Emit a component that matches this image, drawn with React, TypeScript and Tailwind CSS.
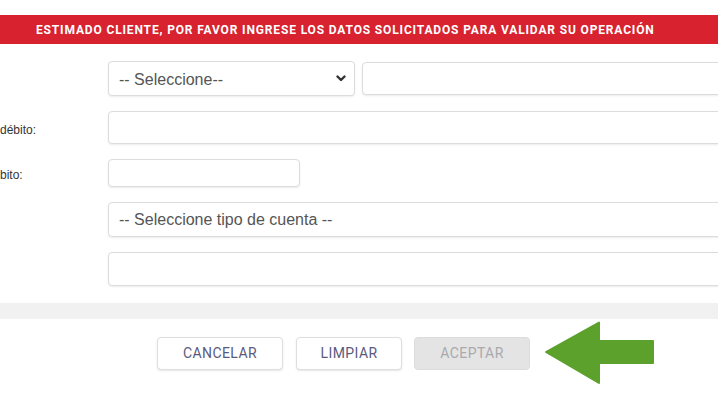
import React from 'react';

const font = { fontFamily: 'Roboto, "Liberation Sans", Arial, sans-serif' };
const arial = { fontFamily: '"Liberation Sans", Arial, sans-serif' };

const Box = ({ className = '', children }: { className?: string; children?: React.ReactNode }) => (
  <div
    className={`rounded-[4px] border border-[#dcdcdc] bg-white shadow-[0_1px_2px_rgba(0,0,0,0.08)] ${className}`}
  >
    {children}
  </div>
);

const Chevron = () => (
  <svg width="10" height="7" viewBox="0 0 10 7">
    <path d="M1.5 1.5 L5 5 L8.5 1.5" stroke="#333" strokeWidth="2.4" fill="none" strokeLinecap="round" strokeLinejoin="round" />
  </svg>
);

const App = () => {
  return (
    <div className="w-[718px] h-[400px] overflow-hidden bg-white" style={font}>
      <div className="pt-[15px]">
        {/* banda roja */}
        <div className="h-[29px] w-full bg-[#d8222f] flex items-center pl-[36px]">
          <span className="text-white font-bold text-[12px] tracking-[0.85px] uppercase">
            Estimado cliente, por favor ingrese los datos solicitados para validar su operación
          </span>
        </div>

        {/* formulario */}
        <div className="w-[740px] mt-[17px] grid grid-cols-[108px_1fr] gap-y-[15px] items-center">
          <div />
          <div className="flex gap-[7px]">
            <Box className="w-[247px] h-[35px] flex items-center justify-between pl-[10px] pr-[8px]">
              <span className="text-[16px] leading-none pt-[2px] text-[#555]" style={arial}>-- Seleccione--</span>
              <Chevron />
            </Box>
            <Box className="flex-1 h-[33px] mt-[1px]" />
          </div>

          <div className="text-[12px] text-[#333] pt-[4px]" style={arial}>débito:</div>
          <Box className="h-[33px]" />

          <div className="text-[12px] text-[#333] pt-[4px]" style={arial}>bito:</div>
          <Box className="w-[192px] h-[28px]" />

          <div />
          <Box className="h-[35px] flex items-center pl-[10px]">
            <span className="text-[16px] leading-none pt-[1px] text-[#555]" style={arial}>-- Seleccione tipo de cuenta --</span>
          </Box>

          <div />
          <Box className="h-[34px]" />
        </div>

        {/* banda gris */}
        <div className="mt-[17px] h-[16px] w-full bg-[#f1f1f1]" />

        {/* botones */}
        <div className="mt-[2px] flex items-center pl-[157px]">
          <button className="w-[126px] h-[33px] rounded-[4px] border border-[#dedede] bg-white shadow-[0_1px_2px_rgba(0,0,0,0.1)] text-[14px] text-[#5a5a7e] tracking-[0.4px]">
            CANCELAR
          </button>
          <button className="ml-[13px] w-[106px] h-[33px] rounded-[4px] border border-[#dedede] bg-white shadow-[0_1px_2px_rgba(0,0,0,0.1)] text-[14px] text-[#5a5a7e] tracking-[0.4px]">
            LIMPIAR
          </button>
          <button className="ml-[12px] w-[116px] h-[33px] rounded-[4px] border border-[#dcdcdc] bg-[#e4e4e4] text-[14px] text-[#a9a9ae] tracking-[0.4px]">
            ACEPTAR
          </button>
          <svg className="ml-[14px]" width="112" height="64" viewBox="0 0 112 64">
            <path
              d="M2 31 L55 1.5 L55 20 L109 20 L109 42 L55 42 L55 62 Z"
              fill="#5ba12b"
              stroke="#5ba12b"
              strokeWidth="2"
              strokeLinejoin="round"
            />
          </svg>
        </div>
      </div>
    </div>
  );
};

export default App;
